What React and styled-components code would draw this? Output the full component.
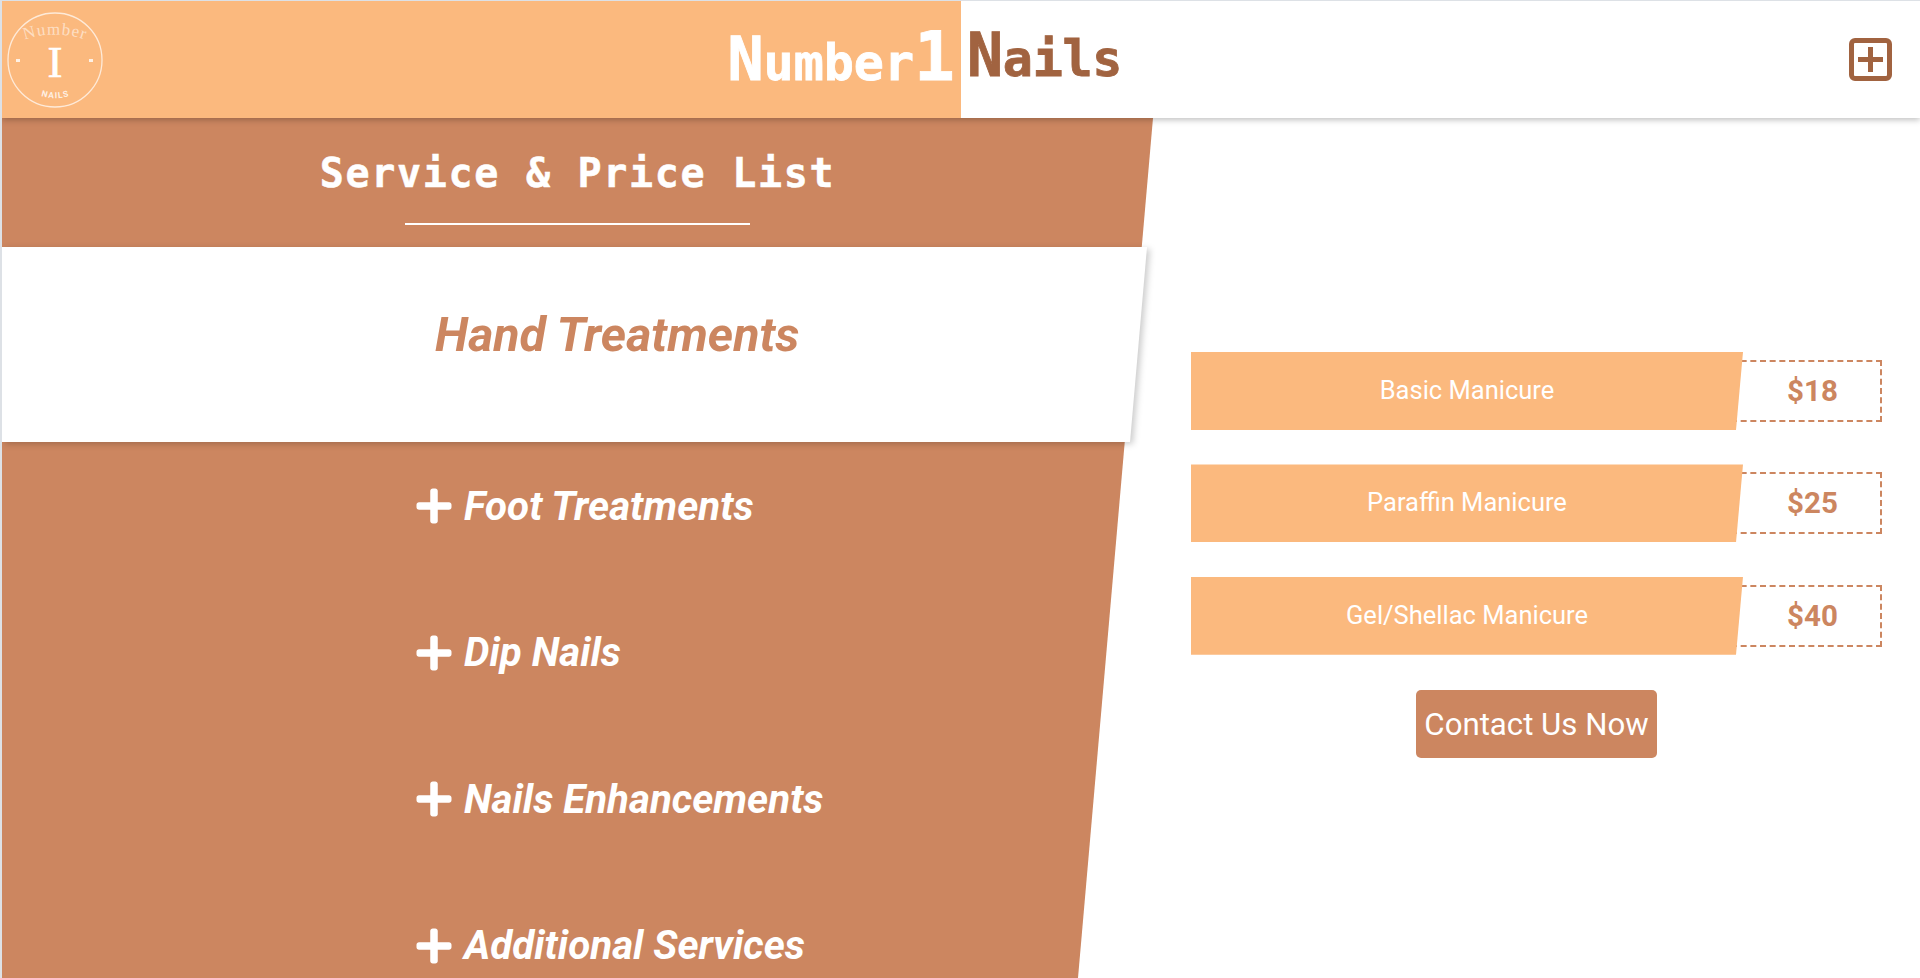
import React from "react"
import styled, { createGlobalStyle } from "styled-components"
import { FaPlus } from "react-icons/fa"

const GlobalStyle = createGlobalStyle`
  html, body {
    margin: 0;
    padding: 0;
    background: #fff;
    overflow: hidden;
  }
  * {
    box-sizing: border-box;
  }
`

const peach = "#fbb97e"
const clay = "#cc8660"
const bark = "#a16340"
const mono = `"DejaVu Sans Mono", "Liberation Mono", monospace`
const sans = `Roboto, "Liberation Sans", sans-serif`

const Page = styled.div`
  height: 100vh;
  overflow: hidden;
  border-top: 1px solid #dde1e6;
  border-left: 2px solid #dde1e6;
  display: flex;
  flex-direction: column;
  font-family: ${sans};
`

const Header = styled.header`
  height: 117px;
  flex: none;
  display: grid;
  grid-template-columns: 959px 1fr;
  background: #fff;
  box-shadow: 0 2px 6px rgba(0, 0, 0, 0.25);
  position: relative;
  z-index: 3;
`

const BrandLeft = styled.div`
  background: ${peach};
  display: flex;
  align-items: center;
  justify-content: space-between;
  padding: 0 6px 0 5px;
`

const BrandRight = styled.div`
  display: flex;
  align-items: center;
  justify-content: space-between;
  padding: 0 28px 0 6px;
`

const Word = styled.h1`
  margin: 0 0 ${(p) => p.$lift}px;
  font-family: ${mono};
  font-weight: 700;
  font-size: 50px;
  line-height: 1;
  letter-spacing: ${(p) => p.$tight || 0}px;
  color: ${(p) => p.$color};
  -webkit-text-stroke: 0.8px ${(p) => p.$color};
  display: flex;
  align-items: baseline;
  span {
    font-size: 60px;
  }
  b {
    font-size: 68px;
  }
`

const Main = styled.main`
  flex: 1;
  display: grid;
  grid-template-columns: 1151px 1fr;
  min-height: 0;
`

const Panel = styled.section`
  position: relative;
  &::before {
    content: "";
    position: absolute;
    inset: 0;
    background: ${clay};
    clip-path: polygon(0 0, 100% 0, 1076px 100%, 0 100%);
  }
`

const PanelTitle = styled.div`
  position: relative;
  height: 129px;
  display: flex;
  flex-direction: column;
  align-items: center;
  padding-top: 32px;
  h2 {
    margin: 0;
    font-family: ${mono};
    font-weight: 700;
    font-size: 40px;
    line-height: 46px;
    letter-spacing: 1.7px;
    color: #fff;
    -webkit-text-stroke: 0.5px #fff;
  }
  i {
    display: block;
    width: 345px;
    height: 2px;
    background: #fff;
    margin-top: 27px;
  }
`

const ActiveWrap = styled.div`
  position: relative;
  width: 1145px;
  filter: drop-shadow(3px 2px 3px rgba(0, 0, 0, 0.2));
`

const Active = styled.div`
  height: 195px;
  background: #fff;
  clip-path: polygon(0 0, 100% 0, 1128px 100%, 0 100%);
  display: flex;
  align-items: center;
  padding: 0 0 20px 433px;
  font-size: 48.4px;
  font-weight: 700;
  font-style: italic;
  color: ${clay};
`

const List = styled.ul`
  position: relative;
  list-style: none;
  margin: 0;
  padding: 34px 0 0 412px;
  display: flex;
  flex-direction: column;
  gap: 86.5px;
`

const Item = styled.li`
  height: 60px;
  display: flex;
  align-items: center;
  gap: 10px;
  font-size: 40.3px;
  font-weight: 700;
  font-style: italic;
  color: #fff;
  svg {
    font-size: 40px;
    flex: none;
  }
`

const Prices = styled.section`
  padding: 234px 38px 0;
  display: flex;
  flex-direction: column;
  align-items: center;
  gap: 34.4px;
`

const Row = styled.div`
  width: 691px;
  height: 78px;
  display: flex;
  align-items: center;
`

const Name = styled.div`
  position: relative;
  z-index: 1;
  width: 552px;
  height: 100%;
  flex: none;
  background: ${peach};
  clip-path: polygon(0 0, 100% 0, 545px 100%, 0 100%);
  display: flex;
  align-items: center;
  justify-content: center;
  padding-bottom: 2px;
  font-size: 25.5px;
  color: #fff;
`

const Price = styled.div`
  flex: 1;
  height: 62px;
  margin-left: -12px;
  padding-left: 12px;
  border: 2px dashed ${clay};
  display: flex;
  align-items: center;
  justify-content: center;
  font-size: 29.5px;
  font-weight: 700;
  color: ${clay};
`

const Contact = styled.button`
  width: 241px;
  height: 68px;
  margin-top: 1px;
  padding: 0;
  border: none;
  border-radius: 5px;
  background: ${clay};
  color: #fff;
  font-family: ${sans};
  font-size: 31.2px;
`

const Logo = () => (
  <svg width="97" height="97" viewBox="0 0 97 97" style={{ marginTop: 2 }}>
    <defs>
      <path id="logoTop" d="M14 29 A93 93 0 0 1 82 29" />
      <path id="logoBottom" d="M24 79 A45 45 0 0 0 73 79" />
    </defs>
    <circle cx="48" cy="48" r="47" fill="none" stroke="#fff" strokeOpacity="0.7" strokeWidth="1.3" />
    <text fill="#fff" fillOpacity="0.55" fontFamily="'Liberation Serif', serif" fontSize="17" letterSpacing="1">
      <textPath href="#logoTop" startOffset="50%" textAnchor="middle">Number</textPath>
    </text>
    <text x="48" y="65" fill="#fff" stroke="#fff" strokeWidth="0.6" textAnchor="middle" fontFamily="'Liberation Serif', serif" fontSize="45">I</text>
    <rect x="9" y="47" width="4" height="3" fill="#fff" fillOpacity="0.8" />
    <rect x="82" y="47" width="4" height="3" fill="#fff" fillOpacity="0.8" />
    <text fill="#fff" fillOpacity="0.8" fontFamily="Roboto, sans-serif" fontSize="8.5" fontWeight="700" letterSpacing="1">
      <textPath href="#logoBottom" startOffset="50%" textAnchor="middle">NAILS</textPath>
    </text>
  </svg>
)

const MenuIcon = () => (
  <svg width="43" height="43" viewBox="0 0 43 43" fill="none" stroke={bark} strokeWidth="5">
    <rect x="2.5" y="2.5" width="38" height="38" rx="3.5" />
    <path d="M9 21.5H34M21.5 9V34" />
  </svg>
)

const services = ["Foot Treatments", "Dip Nails", "Nails Enhancements", "Additional Services"]
const prices = [
  { name: "Basic Manicure", price: "$18" },
  { name: "Paraffin Manicure", price: "$25" },
  { name: "Gel/Shellac Manicure", price: "$40" },
]

const App = () => {
  return (
    <Page>
      <GlobalStyle />
      <Header>
        <BrandLeft>
          <Logo />
          <Word $color="#fff" $lift={6}>
            <span>N</span>umber<b>1</b>
          </Word>
        </BrandLeft>
        <BrandRight>
          <Word $color={bark} $lift={9} $tight={-0.3}>
            <span>N</span>ails
          </Word>
          <MenuIcon />
        </BrandRight>
      </Header>
      <Main>
        <Panel>
          <PanelTitle>
            <h2>Service &amp; Price List</h2>
            <i />
          </PanelTitle>
          <ActiveWrap>
            <Active>Hand Treatments</Active>
          </ActiveWrap>
          <List>
            {services.map((item) => (
              <Item key={item}>
                <FaPlus />
                {item}
              </Item>
            ))}
          </List>
        </Panel>
        <Prices>
          {prices.map((item) => (
            <Row key={item.name}>
              <Name>{item.name}</Name>
              <Price>{item.price}</Price>
            </Row>
          ))}
          <Contact>Contact Us Now</Contact>
        </Prices>
      </Main>
    </Page>
  )
}

export default App
